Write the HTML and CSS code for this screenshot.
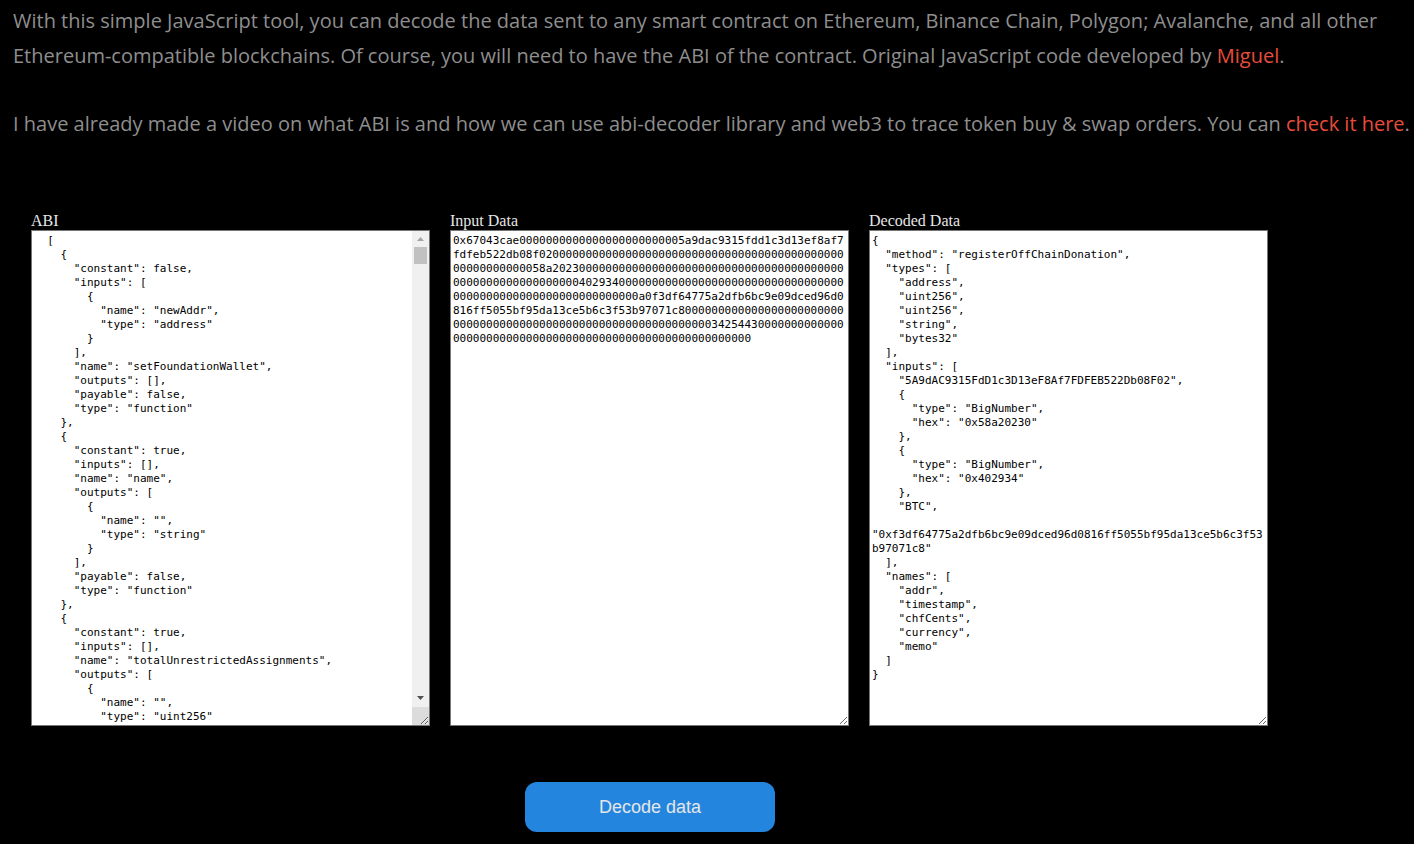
FILE: index.html
```html
<!DOCTYPE html>
<html lang="en">
<head>
<meta charset="utf-8">
<title>Input Data Decoder</title>
<link rel="stylesheet" href="styles.css">
</head>
<body>
<main class="page">
<section class="intro">
<p>With this simple JavaScript tool, you can decode the data sent to any smart contract on Ethereum, Binance Chain, Polygon; Avalanche, and all other Ethereum-compatible blockchains. Of course, you will need to have the ABI of the contract. Original JavaScript code developed by <a href="#">Miguel</a>.</p>
<p>I have already made a video on what ABI is and how we can use abi-decoder library and web3 to trace token buy &amp; swap orders. You can <a href="#">check it here</a>.</p>
</section>
<section class="decoder">
<div class="panel">
<label for="abi">ABI</label>
<textarea id="abi" class="code scroll" spellcheck="false">  [
    {
      "constant": false,
      "inputs": [
        {
          "name": "newAddr",
          "type": "address"
        }
      ],
      "name": "setFoundationWallet",
      "outputs": [],
      "payable": false,
      "type": "function"
    },
    {
      "constant": true,
      "inputs": [],
      "name": "name",
      "outputs": [
        {
          "name": "",
          "type": "string"
        }
      ],
      "payable": false,
      "type": "function"
    },
    {
      "constant": true,
      "inputs": [],
      "name": "totalUnrestrictedAssignments",
      "outputs": [
        {
          "name": "",
          "type": "uint256"
        }
      ],
      "payable": false,
      "type": "function"
    },
    {
      "constant": true,
      "inputs": [],
      "name": "totalSupply",
      "outputs": [
        {
          "name": "",
          "type": "uint256"
        }
      ],
      "payable": false,
      "type": "function"
    }
  ]</textarea>
</div>
<div class="panel">
<label for="input">Input Data</label>
<textarea id="input" class="code" spellcheck="false">0x67043cae0000000000000000000000005a9dac9315fdd1c3d13ef8af7fdfeb522db08f020000000000000000000000000000000000000000000000000000000058a20230000000000000000000000000000000000000000000000000000000000040293400000000000000000000000000000000000000000000000000000000000000a0f3df64775a2dfb6bc9e09dced96d0816ff5055bf95da13ce5b6c3f53b97071c800000000000000000000000000000000000000000000000000000000000000034254430000000000000000000000000000000000000000000000000000000000</textarea>
</div>
<div class="panel">
<label for="decoded">Decoded Data</label>
<textarea id="decoded" class="code" spellcheck="false">{
  "method": "registerOffChainDonation",
  "types": [
    "address",
    "uint256",
    "uint256",
    "string",
    "bytes32"
  ],
  "inputs": [
    "5A9dAC9315FdD1c3D13eF8Af7FDFEB522Db08F02",
    {
      "type": "BigNumber",
      "hex": "0x58a20230"
    },
    {
      "type": "BigNumber",
      "hex": "0x402934"
    },
    "BTC",

"0xf3df64775a2dfb6bc9e09dced96d0816ff5055bf95da13ce5b6c3f53b97071c8"
  ],
  "names": [
    "addr",
    "timestamp",
    "chfCents",
    "currency",
    "memo"
  ]
}</textarea>
</div>
</section>
<div class="actions">
<button class="decode" type="button">Decode data</button>
</div>
</main>
</body>
</html>
```
FILE: styles.css
```css
* { box-sizing: border-box; }
html, body { margin: 0; height: 100%; background: #000; overflow: hidden; }
.page { padding: 4px 0 0 13px; }
.intro p {
  margin: 0 0 34px;
  font-family: "Open Sans", sans-serif;
  font-size: 20px;
  line-height: 34.5px;
  color: #8e8e8e;
  width: 1400px;
}
.intro a { color: #e74c3c; text-decoration: none; }
.decoder { display: flex; gap: 20px; margin: 0 0 0 18px; padding-top: 36.5px; }
.panel { display: flex; flex-direction: column; width: 399px; }
.panel label {
  font-family: "Liberation Serif", serif;
  font-size: 16px;
  line-height: 18px;
  color: #e6e6e6;
}
.code {
  display: block;
  width: 399px;
  height: 496px;
  margin: 0;
  padding: 3px 2px 2px;
  border: 1px solid #767676;
  background: #fff;
  color: #000;
  font-family: "DejaVu Sans Mono", monospace;
  font-size: 11px;
  line-height: 14px;
  outline: 0;
}
.scroll {
  padding-right: 19px;
  background: #fff url("data:image/svg+xml,%3Csvg xmlns='http://www.w3.org/2000/svg' width='17' height='494'%3E%3Crect width='17' height='494' fill='%23f0f0f0'/%3E%3Cpath d='M5 10h7L8.500 6z' fill='%23a3a3a3'/%3E%3Crect x='2' y='16' width='13' height='17' fill='%23c1c1c1'/%3E%3Cpath d='M5 465h7l-3.500 4z' fill='%23505050'/%3E%3Crect y='476' width='17' height='18' fill='%23dcdcdc'/%3E%3C/svg%3E") right top / 17px 494px no-repeat;
}
.actions { display: flex; padding: 56px 0 0 512px; }
.decode {
  width: 250px;
  height: 50px;
  border: 0;
  border-radius: 12px;
  background: #2385de;
  color: #e6e6e6;
  font-family: "Liberation Sans", sans-serif;
  font-size: 18px;
}
```
